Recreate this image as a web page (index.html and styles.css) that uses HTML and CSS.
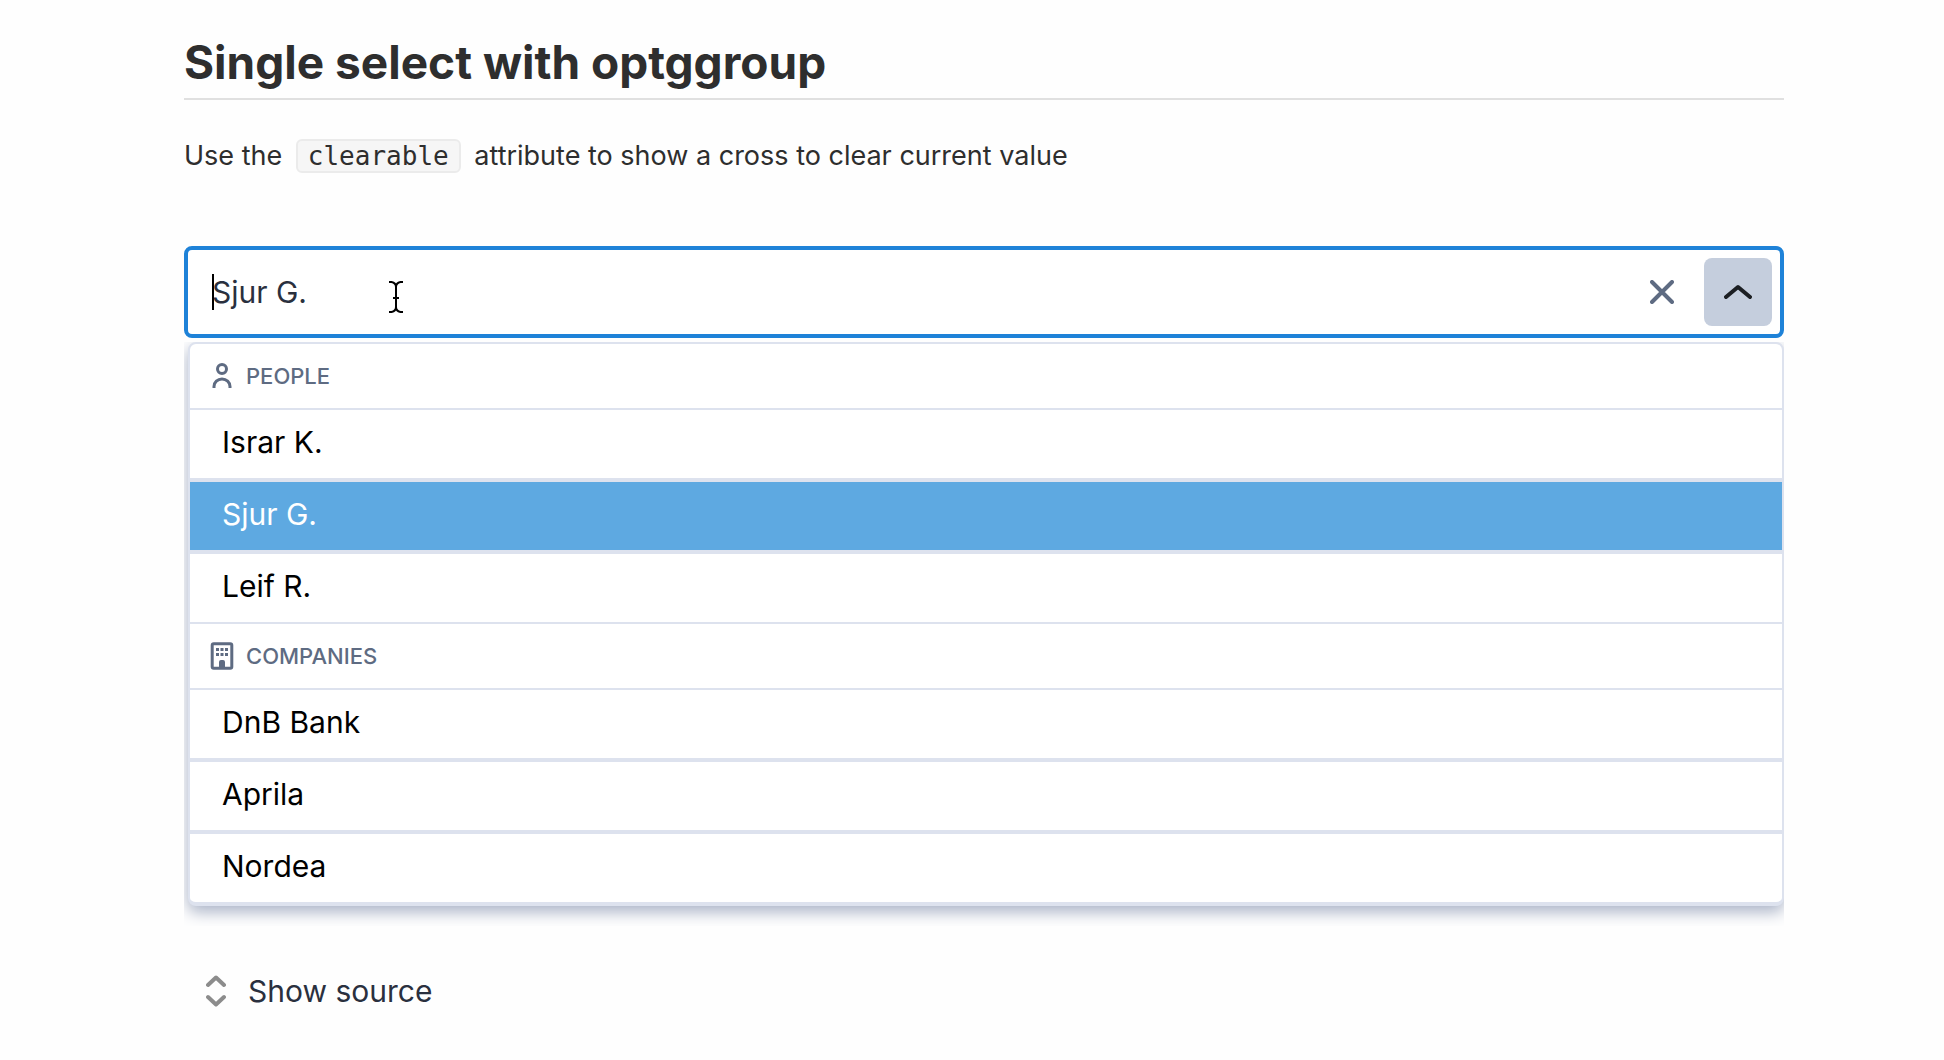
FILE: index.html
```html
<!DOCTYPE html>
<html lang="en">
<head>
<meta charset="utf-8">
<title>Single select with optggroup</title>
<link rel="stylesheet" href="styles.css">
</head>
<body>
<main class="story">
  <h1 class="story-title">Single select with optggroup</h1>
  <p class="story-text">Use the <code class="code">clearable</code> attribute to show a cross to clear current value</p>

  <div class="select">
    <div class="select-control">
      <input class="select-input" type="text" role="combobox" aria-label="Person or company" aria-expanded="true" aria-controls="options" value="Sjur G.">
      <span class="caret"></span>
      <svg class="pointer" viewBox="0 0 14 32" aria-hidden="true"><path d="M0 1h2.500Q7 2 7 6v20q0 4-4.500 5H0M14 1h-2.500Q7 2 7 6v20q0 4 4.500 5H14M4 17h6"/></svg>
      <button class="icon-button" type="button" aria-label="Clear">
        <svg class="icon-clear" viewBox="0 0 24 24"><path d="M2 2l20 20M22 2L2 22"/></svg>
      </button>
      <button class="icon-button icon-button-active" type="button" aria-label="Close list">
        <svg class="icon-chevron" viewBox="0 0 28 16"><path d="M2 13L14 3l12 10"/></svg>
      </button>
    </div>

    <div class="menu" id="options" role="listbox" aria-label="Options">
      <section class="group" role="group" aria-labelledby="people">
        <h2 class="group-title" id="people">
          <svg class="group-icon" viewBox="0 0 24 28"><circle cx="12" cy="7" r="4.500"/><path d="M4 26v-1.500a8 7.500 0 0 1 16 0V26"/></svg>
          PEOPLE
        </h2>
        <ul class="options">
          <li class="option" role="option">Israr K.</li>
          <li class="option option-selected" role="option" aria-selected="true">Sjur G.</li>
          <li class="option" role="option">Leif R.</li>
        </ul>
      </section>
      <section class="group" role="group" aria-labelledby="companies">
        <h2 class="group-title" id="companies">
          <svg class="group-icon" viewBox="0 0 24 28"><rect x="2.200" y="1.700" width="19.600" height="24.600" rx="1.500"/><path class="group-icon-fill" d="M6 6h3v3H6zM10.500 6h3v3h-3zM15 6h3v3h-3zM6 11h3v3H6zM10.500 11h3v3h-3zM15 11h3v3h-3zM9 26v-6q0-2 2-2h2q2 0 2 2v6z"/></svg>
          COMPANIES
        </h2>
        <ul class="options">
          <li class="option" role="option">DnB Bank</li>
          <li class="option" role="option">Aprila</li>
          <li class="option" role="option">Nordea</li>
        </ul>
      </section>
    </div>
  </div>

  <button class="source-button" type="button">
    <svg class="icon-expand" viewBox="0 0 20 32"><path d="M2 10l8-7.500 8 7.500M2 22l8 7.500 8-7.500"/></svg>
    Show source
  </button>
</main>
</body>
</html>
```
FILE: styles.css
```css
* { box-sizing: border-box; }

body {
  margin: 0;
  background: #fefefe;
  color: #2e2e2e;
  font-family: Inter, "Liberation Sans", sans-serif;
}

.story { padding: 30px 160px 32px 184px; }

.story-title {
  margin: 0;
  padding-bottom: 4px;
  border-bottom: 2px solid #e0e0e0;
  font-size: 46px;
  line-height: 64px;
  font-weight: 700;
}

.story-text {
  margin: 36px 0 0;
  font-size: 27px;
  line-height: 40px;
}

.code {
  display: inline-block;
  margin: 0 6px;
  padding: 0 10px;
  border: 2px solid #ebebeb;
  border-radius: 6px;
  background: #f6f6f6;
  font-family: "DejaVu Sans Mono", monospace;
  font-size: 26px;
  line-height: 30px;
}

.select { margin-top: 70px; }

.select-control {
  position: relative;
  display: flex;
  align-items: center;
  gap: 8px;
  height: 92px;
  padding: 0 8px 0 24px;
  border: 4px solid #1e82d8;
  border-radius: 8px;
  background: #fff;
}

.select-input {
  flex: 1;
  min-width: 0;
  padding: 0;
  border: 0;
  outline: 0;
  background: transparent;
  color: #2a303e;
  font: inherit;
  font-size: 30px;
  line-height: 40px;
}

.caret {
  position: absolute;
  top: 24px;
  left: 24px;
  width: 2px;
  height: 36px;
  background: #000;
}

.pointer {
  position: absolute;
  top: 31px;
  left: 201px;
  width: 14px;
  height: 32px;
  fill: none;
  stroke: #000;
  stroke-width: 2;
}

.icon-button {
  display: grid;
  place-items: center;
  width: 68px;
  height: 68px;
  padding: 0;
  border: 0;
  border-radius: 8px;
  background: transparent;
}

.icon-button-active { background: #c5cedd; }

.icon-clear,
.icon-chevron,
.icon-expand {
  fill: none;
  stroke-linecap: round;
  stroke-linejoin: round;
}

.icon-clear { width: 24px; height: 24px; stroke: #5e6b82; stroke-width: 4; }
.icon-chevron { width: 28px; height: 16px; stroke: #1c1f23; stroke-width: 4; }
.icon-expand { width: 20px; height: 32px; stroke: #8c8c8c; stroke-width: 4; }

.menu {
  margin: 4px 0 0 4px;
  border: 2px solid #dde2ee;
  border-bottom-width: 4px;
  border-radius: 8px;
  background: #fff;
  box-shadow: 0 6px 16px #a9b2c6;
  clip-path: inset(0 0 -20px -4px);
}

.group + .group { border-top: 2px solid #dde2ee; }

.group-title {
  display: flex;
  align-items: center;
  gap: 12px;
  height: 66px;
  margin: 0;
  padding: 0 20px;
  border-bottom: 2px solid #dde2ee;
  color: #5e6b82;
  font-size: 22px;
  line-height: 28px;
  font-weight: 500;
}

.group-icon {
  width: 24px;
  height: 28px;
  fill: none;
  stroke: currentColor;
  stroke-width: 3;
}

.group-icon-fill { fill: currentColor; stroke: none; }

.options {
  margin: 0;
  padding: 0;
  list-style: none;
}

.option {
  padding: 12px 32px 16px;
  color: #000;
  font-size: 30px;
  line-height: 40px;
}

.option + .option { border-top: 4px solid #dde2ee; }

.option-selected { background: #5ea9e1; background-clip: padding-box; color: #fff; }

.source-button {
  display: flex;
  align-items: center;
  gap: 22px;
  margin-top: 64px;
  padding: 0 22px;
  border: 0;
  background: transparent;
  color: #2a303e;
  font: inherit;
  font-size: 30px;
  line-height: 42px;
}
```
